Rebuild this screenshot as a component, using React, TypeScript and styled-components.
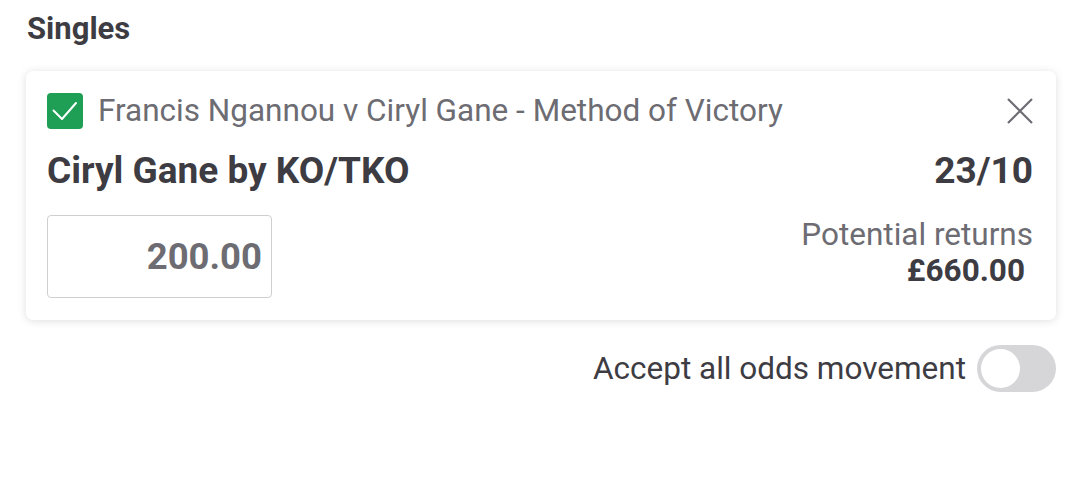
import React from "react";
import styled, { createGlobalStyle } from "styled-components";

const Global = createGlobalStyle`
  html, body { margin: 0; padding: 0; background: #fff; }
  body { font-family: Roboto, "Noto Sans", Arial, sans-serif; }
`;

const Page = styled.div`
  width: 1079px;
  height: 490px;
  box-sizing: border-box;
  padding: 10px 23px 0 26px;
  display: flex;
  flex-direction: column;
`;

const Heading = styled.h2`
  margin: 0 0 0 1px;
  font-size: 31px;
  line-height: 38px;
  font-weight: 700;
  color: #3d3c43;
`;

const Card = styled.div`
  margin-top: 23px;
  background: #fff;
  border-radius: 7px;
  box-shadow: 0 1px 8px rgba(0, 0, 0, 0.13);
  padding: 22px 23px 22px 21px;
  display: flex;
  flex-direction: column;
`;

const Row = styled.div<{ $align?: string; $mt?: number }>`
  display: flex;
  justify-content: space-between;
  align-items: ${(p) => p.$align || "center"};
  margin-top: ${(p) => p.$mt || 0}px;
`;

const Left = styled.div`
  display: flex;
  align-items: center;
  gap: 15px;
`;

const Check = styled.div`
  width: 36px;
  height: 36px;
  border-radius: 4px;
  background: #1f9e55;
  display: flex;
`;

const EventName = styled.span`
  font-size: 31.5px;
  line-height: 36px;
  color: #6d6c73;
`;

const CloseBtn = styled.button`
  border: 0;
  background: none;
  padding: 0;
  width: 26px;
  height: 26px;
  display: flex;
  cursor: pointer;
`;

const Selection = styled.span`
  font-size: 37px;
  font-weight: 700;
  color: #3d3c43;
  line-height: 40px;
`;

const StakeBox = styled.div`
  width: 225px;
  height: 83px;
  box-sizing: border-box;
  border: 1.5px solid #cfcfd2;
  border-radius: 4px;
  display: flex;
  align-items: center;
  justify-content: flex-end;
  padding-right: 9px;
  font-size: 36.5px;
  font-weight: 700;
  color: #6d6c73;
`;

const Returns = styled.div`
  display: flex;
  flex-direction: column;
  align-items: flex-end;
  margin-top: 2px;
`;

const ReturnsLabel = styled.span`
  font-size: 31.5px;
  color: #6d6c73;
  line-height: 36px;
`;

const ReturnsValue = styled.span`
  font-size: 31.5px;
  font-weight: 700;
  color: #3d3c43;
  line-height: 36px;
  margin-right: 8px;
`;

const ToggleRow = styled.div`
  margin-top: 25px;
  display: flex;
  justify-content: flex-end;
  align-items: center;
  gap: 11px;
`;

const ToggleLabel = styled.span`
  font-size: 31.5px;
  line-height: 36px;
  color: #3d3c43;
`;

const Track = styled.div`
  width: 79px;
  height: 47px;
  border-radius: 24px;
  background: #d6d6d8;
  display: flex;
  align-items: center;
  padding-left: 4px;
  box-sizing: border-box;
`;

const Knob = styled.div`
  width: 39px;
  height: 39px;
  border-radius: 50%;
  background: #fff;
`;

export default function App() {
  return (
    <>
      <Global />
      <Page>
        <Heading>Singles</Heading>
        <Card>
          <Row>
            <Left>
              <Check>
                <svg width="36" height="36" viewBox="0 0 36 36" fill="none">
                  <path d="M6.5 17.5l8.5 8.5L29 10" stroke="#fff" strokeWidth="2" strokeLinecap="round" strokeLinejoin="round" />
                </svg>
              </Check>
              <EventName>Francis Ngannou v Ciryl Gane - Method of Victory</EventName>
            </Left>
            <CloseBtn aria-label="Remove">
              <svg width="26" height="26" viewBox="0 0 26 26" fill="none">
                <path d="M1 1l24 24M25 1L1 25" stroke="#6d6c73" strokeWidth="2.2" />
              </svg>
            </CloseBtn>
          </Row>
          <Row $mt={22}>
            <Selection>Ciryl Gane by KO/TKO</Selection>
            <Selection>23/10</Selection>
          </Row>
          <Row $align="flex-start" $mt={24}>
            <StakeBox>200.00</StakeBox>
            <Returns>
              <ReturnsLabel>Potential returns</ReturnsLabel>
              <ReturnsValue>£660.00</ReturnsValue>
            </Returns>
          </Row>
        </Card>
        <ToggleRow>
          <ToggleLabel>Accept all odds movement</ToggleLabel>
          <Track>
            <Knob />
          </Track>
        </ToggleRow>
      </Page>
    </>
  );
}
